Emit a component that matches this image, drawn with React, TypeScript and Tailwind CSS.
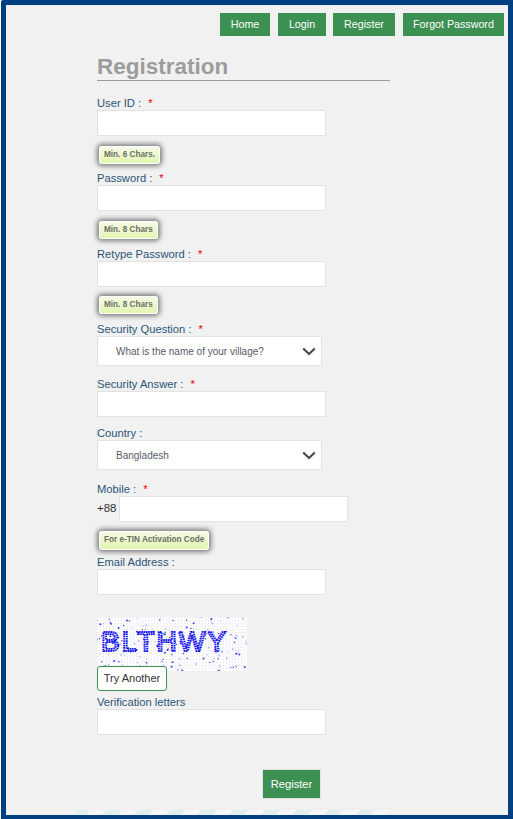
const navItems = [
    { label: 'Home', className: 'w-[50px]' },
    { label: 'Login', className: 'w-[48px]' },
    { label: 'Register', className: 'w-[62px] ml-[-1px]' },
    { label: 'Forgot Password', className: 'w-[101px]' },
];

// fixed pseudo random noise for the captcha picture
const rnd = (n: number) => {
    const v = Math.sin(n * 12.9898) * 43758.5453;
    return v - Math.floor(v);
};
const noise = Array.from({ length: 170 }, (_, i) => ({
    x: rnd(i + 1) * 150,
    y: rnd(i + 500) * 54,
    r: rnd(i + 900) > 0.6 ? 1 : 0.7,
    o: rnd(i + 1300) > 0.55 ? 0.85 : 0.3,
}));

function Label({ text, required, className = '' }: { text: string; required?: boolean; className?: string }) {
    return (
        <label className={`block text-[11.2px] leading-[14px] text-[#2a5578] ${className}`}>
            {text}
            {required && <span className="ml-[7px] text-[#f00000]">*</span>}
        </label>
    );
}

function TextBox() {
    return <div className="h-[26px] w-[229px] border border-[#e2e2e2] bg-white"></div>;
}

function Hint({ text, className = 'h-[18px]' }: { text: string; className?: string }) {
    return (
        <div className={`ml-[2px] w-fit rounded-[3px] border border-white bg-gradient-to-b from-[#f6fbe6] to-[#e2f5b0] px-[4px] text-[8.2px] font-bold leading-[16px] text-[#6a6e66] shadow-[0_0_5px_2px_rgba(0,0,0,0.5)] ${className}`}>
            {text}
        </div>
    );
}

function SelectBox({ value }: { value: string }) {
    return (
        <div className="flex h-[30px] w-[225px] items-center justify-between border border-[#e2e2e2] bg-white pl-[18px] pr-[5px]">
            <span className="text-[10px] text-[#555b66]">{value}</span>
            <svg width="14" height="9" viewBox="0 0 14 9" fill="none" stroke="#4b4b4b" strokeWidth="2.2">
                <path d="M1.2 1.5 L7 7 L12.8 1.5" />
            </svg>
        </div>
    );
}

function Captcha() {
    return (
        <svg width="150" height="54" viewBox="0 0 150 54" className="block bg-white">
            <defs>
                <pattern id="dots" width="3" height="3" patternUnits="userSpaceOnUse">
                    <rect width="1" height="1" fill="#e2e2f0" />
                    <rect x="1.5" y="1.5" width="1" height="1" fill="#ececf5" />
                </pattern>
            </defs>
            <rect width="150" height="54" fill="url(#dots)" />
            {noise.map((n, i) => (
                <circle key={i} cx={n.x} cy={n.y} r={n.r} fill="#2020e0" opacity={n.o} />
            ))}
            <text
                x="4"
                y="34"
                fontFamily="'Liberation Sans', sans-serif"
                fontSize="28"
                fill="none"
                stroke="#1010e8"
                strokeWidth="1.9"
                strokeDasharray="1.6 0.7"
                textLength="125"
                lengthAdjust="spacing"
            >
                BLTHWY
            </text>
        </svg>
    );
}

export default function App() {
    return (
        <div className="ml-[1px] h-[819px] w-[512px] overflow-hidden rounded-tl-[2px] border-[5px] border-b-[4px] border-[#004080] bg-[#f1f1f1] font-['Liberation_Sans',Arial,sans-serif]">
            <nav className="flex justify-end gap-[8px] pr-[4px] pt-[8px]">
                {navItems.map((item) => (
                    <a
                        key={item.label}
                        className={`flex h-[23px] items-center justify-center bg-[#3c9051] text-[10.7px] text-white ${item.className}`}
                    >
                        {item.label}
                    </a>
                ))}
            </nav>

            <main className="ml-[91px] w-[293px]">
                <h1 className="mt-[17px] h-[27px] text-[22.5px] font-bold leading-[28px] text-[#9c9c9c]">Registration</h1>
                <div className="h-px bg-[#9a9a9a]"></div>

                <Label text="User ID :" required className="mt-[15px]" />
                <TextBox />
                <div className="mt-[10px]"><Hint text="Min. 6 Chars." /></div>

                <Label text="Password :" required className="mt-[7px]" />
                <TextBox />
                <div className="mt-[10px]"><Hint text="Min. 8 Chars" /></div>

                <Label text="Retype Password :" required className="mt-[8px]" />
                <TextBox />
                <div className="mt-[9px]"><Hint text="Min. 8 Chars" /></div>

                <Label text="Security Question :" required className="mt-[8px]" />
                <SelectBox value="What is the name of your village?" />

                <Label text="Security Answer :" required className="mt-[11px]" />
                <TextBox />

                <Label text="Country :" className="mt-[9px]" />
                <SelectBox value="Bangladesh" />

                <Label text="Mobile :" required className="mt-[12px]" />
                <div className="flex items-center">
                    <span className="w-[22px] text-[11.5px] text-[#333]">+88</span>
                    <TextBox />
                </div>
                <div className="mt-[9px]"><Hint text="For e-TIN Activation Code" className="h-[19px]" /></div>

                <Label text="Email Address :" className="mt-[5px]" />
                <TextBox />

                <div className="mt-[22px]"><Captcha /></div>
                <button className="relative mt-[-5px] block h-[25px] w-[70px] rounded-[3px] border border-[#3c9051] bg-white text-[11px] text-[#333]">
                    Try Another
                </button>
                <Label text="Verification letters" className="mt-[4px] text-[#2a4a66]" />
                <TextBox />

                <div className="mt-[34px] flex pl-[165px]">
                    <button className="h-[30px] w-[59px] border border-[#e2e2e2] bg-[#3c9051] text-[11.2px] text-white">Register</button>
                </div>

                <div className="ml-[-22px] mt-[11px] h-[5px] w-[315px] bg-[repeating-linear-gradient(135deg,#e2eded_0,#e2eded_11px,#f6f6f6_11px,#f6f6f6_22.4px)]"></div>
            </main>
        </div>
    );
}
